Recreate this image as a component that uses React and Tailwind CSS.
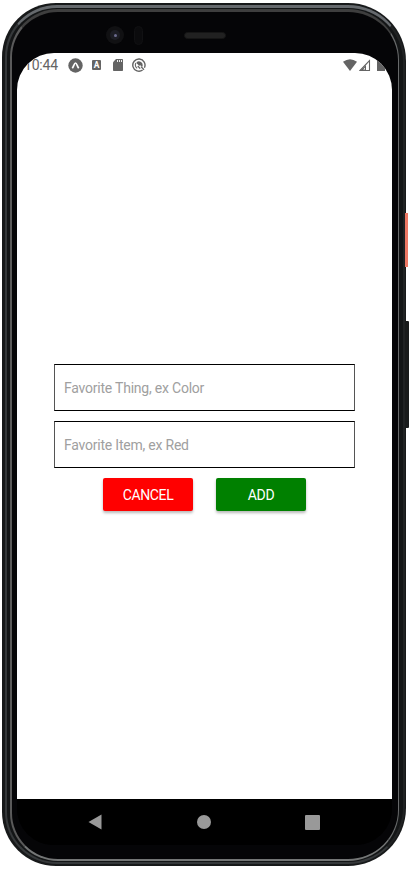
import React from "react";

function StatusBar() {
  return (
    <div className="flex h-[24px] items-center bg-white pl-[7px] text-[#646464]">
      <span className="w-[36px] pt-px text-[14px] leading-[23px] tracking-[-0.2px]">10:44</span>
      <svg className="ml-[8px]" width="15" height="15" viewBox="0 0 15 15">
        <circle cx="7.5" cy="7.5" r="7.2" fill="#646464" />
        <path d="M4.3 10.2C5.6 8.6 6.3 5 7.5 5s1.9 3.6 3.2 5.2" fill="none" stroke="#fff" strokeWidth="1.7" />
      </svg>
      <span className="ml-[9px] flex h-[10px] w-[9px] items-center justify-center rounded-[1px] bg-[#646464] text-[8.5px] font-bold leading-none text-white">A</span>
      <svg className="ml-[12px]" width="10" height="12" viewBox="0 0 10 12">
        <path d="M3 0h6.2q.8 0 .8.8v10.4q0 .8-.8.8H.8q-.8 0-.8-.8V3.2z" fill="#646464" />
        <path d="M4.5 1v2M6.5 1v2M8.5 1v2" stroke="#fff" strokeWidth=".9" />
      </svg>
      <svg className="ml-[9px]" width="14" height="14" viewBox="0 0 14 14">
        <path d="M10.6 12A6.1 6.1 0 1 1 12.4 9.8" fill="none" stroke="#646464" strokeWidth="1.4" />
        <path d="M5.2 10.2A3.7 3.7 0 0 1 3.9 5" fill="none" stroke="#646464" strokeWidth="1.1" />
        <path d="M4.6 4.2A3.7 3.7 0 0 1 10.7 7Q10.7 8 10.2 8.9L8.3 7.2 7.2 7.8 4.6 5.2z" fill="#646464" />
        <path d="M5.8 8l2.4 2.6M9 8.6l3 3.2" stroke="#646464" strokeWidth="1.3" />
      </svg>
      <svg className="ml-auto" width="14" height="12" viewBox="0 0 14 12">
        <path d="M0 2.8Q7-2.2 14 2.8L7 12z" fill="#646464" />
      </svg>
      <svg className="ml-[2px]" width="12" height="12" viewBox="0 0 12 12">
        <path d="M1 11.5L10.5 1.6v9.9z" fill="none" stroke="#646464" strokeWidth="1.1" />
        <path d="M1 12L7 6v6z" fill="#646464" />
        <path d="M4.2 10.4L6 8.6v1.8z" fill="#fff" />
      </svg>
      <svg className="ml-[6px] mr-[7px]" width="8" height="12" viewBox="0 0 8 12">
        <path d="M0 1.5h2V0h4v1.5h2V12H0z" fill="#646464" />
      </svg>
    </div>
  );
}

function Field({ placeholder }) {
  return (
    <input
      placeholder={placeholder}
      className="block h-[47px] w-[301px] border border-black border-x-[#555] bg-white px-[9px] font-['Roboto',sans-serif] text-[14px] font-normal tracking-[-0.22px] outline-none placeholder:text-[#a0a0a0]"
    />
  );
}

export default function App() {
  return (
    <div className="relative h-[871px] w-[411px] overflow-hidden bg-white pl-[2px] pt-[3px] font-['Roboto',sans-serif]">
      <div className="absolute left-[405px] top-[213px] h-[54px] w-[3px] bg-[#ee7864]" />
      <div className="absolute left-[405px] top-[321px] h-[107px] w-[4px] rounded-r-[1px] bg-[#191b1b]" />
      <div className="h-[863px] w-[404px] rounded-l-[54px] rounded-r-[58px] bg-[#17191a] pb-[2px] pl-[3px] pr-px pt-[2px]">
        <div className="h-full rounded-l-[52px] rounded-r-[57px] border-b-2 border-l-2 border-r-2 border-t-[3px] border-b-[#35383a] border-l-[#35383a] border-r-[#202223] border-t-[#65696d] bg-[#131516] pb-px pl-[3px] pr-[4px] pt-px">
          <div className="h-full rounded-l-[48px] rounded-r-[51px] border-b-2 border-l-2 border-r border-t-[3px] border-b-[#747676] border-l-[#5a5a5a] border-r-[#686a6b] border-t-[#3e3e3e] bg-[#050507] pl-[5px] pr-[6px]">
            <div className="flex h-[41px] items-center pl-[89px] pt-[5px]">
              <div className="flex h-[18px] w-[18px] items-center justify-center rounded-full bg-[#111113]">
                <div className="flex h-[10px] w-[10px] items-center justify-center rounded-full bg-[#1c1d24]">
                  <div className="h-[3px] w-[3px] rounded-full bg-[#6b6b8e]" />
                </div>
              </div>
              <div className="ml-[10px] h-[19px] w-[9px] rounded-full border border-[#111113] bg-[#0b0b0d]" />
              <div className="ml-[41px] h-[7px] w-[42px] rounded-full border border-[#151515] bg-[#212121]" />
            </div>
            <main className="flex h-[792px] w-[375px] flex-col overflow-hidden rounded-[37px] bg-black">
              <StatusBar />
              <section className="flex flex-1 flex-col items-center bg-white pt-[287px]">
                <Field placeholder="Favorite Thing, ex Color" />
                <div className="h-[10px]" />
                <Field placeholder="Favorite Item, ex Red" />
                <div className="mt-[10px] flex gap-[23px] text-[14px] font-normal tracking-[-0.35px] text-white">
                  <button className="h-[33px] w-[90px] rounded-[2px] bg-[#ff0000] pt-[2px] shadow-[0_2px_3px_rgba(0,0,0,0.28)]">CANCEL</button>
                  <button className="h-[33px] w-[90px] rounded-[2px] bg-[#008000] pt-[2px] shadow-[0_2px_3px_rgba(0,0,0,0.28)]">ADD</button>
                </div>
              </section>
              <nav className="flex h-[46px] items-center bg-black pl-[71px]">
                <svg width="14" height="16" viewBox="0 0 14 16"><path d="M13.5.5v15L.5 8z" fill="#999" /></svg>
                <div className="ml-[95px] h-[14px] w-[14px] rounded-full bg-[#999]" />
                <div className="ml-[94px] h-[15px] w-[15px] rounded-[1px] bg-[#999]" />
              </nav>
            </main>
          </div>
        </div>
      </div>
    </div>
  );
}
